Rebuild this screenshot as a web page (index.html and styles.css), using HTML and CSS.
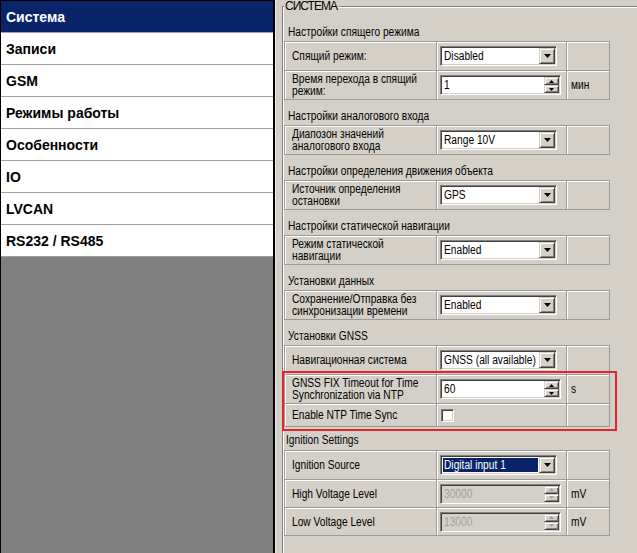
FILE: index.html
```html
<!DOCTYPE html>
<html>
<head>
<meta charset="utf-8">
<link rel="stylesheet" href="styles.css">
</head>
<body>
<div class="app">
  <nav class="nav">
    <ul class="nav-list">
      <li class="nav-item selected">Система</li>
      <li class="nav-item">Записи</li>
      <li class="nav-item">GSM</li>
      <li class="nav-item">Режимы работы</li>
      <li class="nav-item">Особенности</li>
      <li class="nav-item">IO</li>
      <li class="nav-item">LVCAN</li>
      <li class="nav-item">RS232 / RS485</li>
    </ul>
  </nav>
  <div class="splitter"></div>
  <main class="main">
    <fieldset class="group">
      <legend class="group-title">СИСТЕМА</legend>

      <section class="sect">
        <div class="sect-title"><span class="t">Настройки спящего режима</span></div>
        <div class="grid">
          <div class="cell label"><span class="t">Спящий режим:</span></div>
          <div class="cell ctl">
            <div class="combo"><span class="val"><span class="t">Disabled</span></span><span class="btn"><svg width="7" height="4" viewBox="0 0 7 4"><polygon points="0,0 7,0 3.5,4" fill="#000"/></svg></span></div>
          </div>
          <div class="cell unit"></div>
          <div class="cell label"><span class="t2">Время перехода в спящий режим:</span></div>
          <div class="cell ctl">
            <div class="spin"><span class="val"><span class="t">1</span></span><span class="spin-btns"><span class="sbtn"><svg width="5" height="3" viewBox="0 0 5 3"><polygon points="2.5,0 5,3 0,3" fill="#000"/></svg></span><span class="sbtn"><svg width="5" height="3" viewBox="0 0 5 3"><polygon points="0,0 5,0 2.5,3" fill="#000"/></svg></span></span></div>
          </div>
          <div class="cell unit"><span class="t">мин</span></div>
        </div>
      </section>

      <section class="sect">
        <div class="sect-title"><span class="t">Настройки аналогового входа</span></div>
        <div class="grid">
          <div class="cell label"><span class="t2">Диапозон значений аналогового входа</span></div>
          <div class="cell ctl">
            <div class="combo"><span class="val"><span class="t">Range 10V</span></span><span class="btn"><svg width="7" height="4" viewBox="0 0 7 4"><polygon points="0,0 7,0 3.5,4" fill="#000"/></svg></span></div>
          </div>
          <div class="cell unit"></div>
        </div>
      </section>

      <section class="sect">
        <div class="sect-title"><span class="t">Настройки определения движения объекта</span></div>
        <div class="grid">
          <div class="cell label"><span class="t2">Источник определения остановки</span></div>
          <div class="cell ctl">
            <div class="combo"><span class="val"><span class="t">GPS</span></span><span class="btn"><svg width="7" height="4" viewBox="0 0 7 4"><polygon points="0,0 7,0 3.5,4" fill="#000"/></svg></span></div>
          </div>
          <div class="cell unit"></div>
        </div>
      </section>

      <section class="sect">
        <div class="sect-title"><span class="t">Настройки статической навигации</span></div>
        <div class="grid">
          <div class="cell label"><span class="t2">Режим статической навигации</span></div>
          <div class="cell ctl">
            <div class="combo"><span class="val"><span class="t">Enabled</span></span><span class="btn"><svg width="7" height="4" viewBox="0 0 7 4"><polygon points="0,0 7,0 3.5,4" fill="#000"/></svg></span></div>
          </div>
          <div class="cell unit"></div>
        </div>
      </section>

      <section class="sect">
        <div class="sect-title"><span class="t">Установки данных</span></div>
        <div class="grid">
          <div class="cell label"><span class="t2">Сохранение/Отправка без синхронизации времени</span></div>
          <div class="cell ctl">
            <div class="combo"><span class="val"><span class="t">Enabled</span></span><span class="btn"><svg width="7" height="4" viewBox="0 0 7 4"><polygon points="0,0 7,0 3.5,4" fill="#000"/></svg></span></div>
          </div>
          <div class="cell unit"></div>
        </div>
      </section>

      <section class="sect sect-gnss">
        <div class="sect-title"><span class="t">Установки GNSS</span></div>
        <div class="grid grid-gnss">
          <div class="cell label"><span class="t">Навигационная система</span></div>
          <div class="cell ctl">
            <div class="combo"><span class="val"><span class="t">GNSS (all available)</span></span><span class="btn"><svg width="7" height="4" viewBox="0 0 7 4"><polygon points="0,0 7,0 3.5,4" fill="#000"/></svg></span></div>
          </div>
          <div class="cell unit"></div>
          <div class="cell label"><span class="t2">GNSS FIX Timeout for Time Synchronization via NTP</span></div>
          <div class="cell ctl">
            <div class="spin"><span class="val"><span class="t">60</span></span><span class="spin-btns"><span class="sbtn"><svg width="5" height="3" viewBox="0 0 5 3"><polygon points="2.5,0 5,3 0,3" fill="#000"/></svg></span><span class="sbtn"><svg width="5" height="3" viewBox="0 0 5 3"><polygon points="0,0 5,0 2.5,3" fill="#000"/></svg></span></span></div>
          </div>
          <div class="cell unit"><span class="t">s</span></div>
          <div class="cell label"><span class="t">Enable NTP Time Sync</span></div>
          <div class="cell ctl"><span class="check"></span></div>
          <div class="cell unit"></div>
        </div>
        <div class="highlight"></div>
      </section>

      <section class="sect sect-ign">
        <div class="sect-title"><span class="t">Ignition Settings</span></div>
        <div class="grid grid-ign">
          <div class="cell label"><span class="t">Ignition Source</span></div>
          <div class="cell ctl">
            <div class="combo"><span class="val sel"><span class="t">Digital input 1</span></span><span class="btn"><svg width="7" height="4" viewBox="0 0 7 4"><polygon points="0,0 7,0 3.5,4" fill="#000"/></svg></span></div>
          </div>
          <div class="cell unit"></div>
          <div class="cell label"><span class="t">High Voltage Level</span></div>
          <div class="cell ctl">
            <div class="spin disabled"><span class="val"><span class="t">30000</span></span><span class="spin-btns"><span class="sbtn"><svg width="5" height="3" viewBox="0 0 5 3"><polygon points="2.5,0 5,3 0,3" fill="#a0a0a0"/></svg></span><span class="sbtn"><svg width="5" height="3" viewBox="0 0 5 3"><polygon points="0,0 5,0 2.5,3" fill="#a0a0a0"/></svg></span></span></div>
          </div>
          <div class="cell unit"><span class="t">mV</span></div>
          <div class="cell label"><span class="t">Low Voltage Level</span></div>
          <div class="cell ctl">
            <div class="spin disabled"><span class="val"><span class="t">13000</span></span><span class="spin-btns"><span class="sbtn"><svg width="5" height="3" viewBox="0 0 5 3"><polygon points="2.5,0 5,3 0,3" fill="#a0a0a0"/></svg></span><span class="sbtn"><svg width="5" height="3" viewBox="0 0 5 3"><polygon points="0,0 5,0 2.5,3" fill="#a0a0a0"/></svg></span></span></div>
          </div>
          <div class="cell unit"><span class="t">mV</span></div>
        </div>
      </section>
    </fieldset>
  </main>
</div>
</body>
</html>
```

FILE: styles.css
```css
* { box-sizing: border-box; }
html, body { margin: 0; padding: 0; }
body {
  width: 637px;
  height: 553px;
  overflow: hidden;
  background: #d4d0c8;
  font-family: "Liberation Sans", Arial, sans-serif;
  font-size: 12px;
  color: #000;
}
.app { display: flex; height: 553px; }

.nav {
  width: 275px;
  flex: none;
  background: #808080;
  border-left: 1px solid #000;
  border-right: 2px solid #000;
  border-top: 1px solid #000;
}
.nav-list { list-style: none; margin: 0; padding: 0; }
.nav-item {
  height: 32px;
  line-height: 33px;
  border-bottom: 1px solid #a0a0a0;
  background: #fff;
  padding-left: 5px;
  font-weight: bold;
  font-size: 14px;
  white-space: nowrap;
}
.nav-item.selected { background: #0a246a; color: #fff; }

.splitter { width: 1px; flex: none; background: #eeece6; }

.main { flex: 1; overflow: hidden; padding-left: 6px; }

.group {
  margin: 0;
  width: 380px;
  height: 620px;
  border: 1px solid #808080;
  box-shadow: inset 1px 1px 0 #fff;
  padding: 3px 0 0 1px;
  min-width: 0;
}
.group-title {
  padding: 0 2px 0 1px;
  line-height: 13px;
  font-size: 12px;
  letter-spacing: -1px;
  background: #d4d0c8;
}

/* narrow rendering of the dialog font */
.t {
  display: inline-block;
  flex: none;
  white-space: nowrap;
  transform: scaleX(0.85);
  transform-origin: 0 50%;
}
.t2 {
  display: block;
  flex: none;
  width: 160px;
  transform: scaleX(0.85);
  transform-origin: 0 50%;
}

.sect { margin-top: 8px; position: relative; }
.sect-title { height: 17px; line-height: 17px; padding-left: 4px; white-space: nowrap; }

.grid {
  display: grid;
  grid-template-columns: 152px 130px 43px;
  grid-auto-rows: 29px;
  width: fit-content;
  border-top: 1px solid #9a9a9a;
  border-left: 1px solid #9a9a9a;
}
.grid-gnss { grid-template-rows: 29px 29px 23px; }
.grid-ign { grid-template-rows: 29px 28px 28px; }

.cell {
  border-right: 1px solid #9a9a9a;
  border-bottom: 1px solid #9a9a9a;
  box-shadow: inset 1px 1px 0 #fff;
  display: flex;
  align-items: center;
  overflow: hidden;
}
.label { padding-left: 7px; padding-right: 0; line-height: 12px; }
.ctl { padding-left: 3px; }
.unit { padding-left: 4px; }

.combo, .spin {
  height: 20px;
  display: flex;
  align-items: stretch;
  background: #fff;
  border: 1px solid;
  border-color: #808080 #fff #fff #808080;
  box-shadow: inset 1px 1px 0 #404040, inset -1px -1px 0 #d4d0c8;
  padding: 1px;
}
.combo { width: 117px; }
.spin { width: 121px; }
.val {
  flex: 1;
  min-width: 0;
  padding-left: 2px;
  line-height: 16px;
  white-space: nowrap;
  overflow: hidden;
}
.val.sel {
  background: #0a246a;
  color: #fff;
  margin: 1px;
  line-height: 14px;
  padding-left: 1px;
}
.btn, .sbtn {
  flex: none;
  display: flex;
  align-items: center;
  justify-content: center;
  background: #d4d0c8;
  border: 1px solid;
  border-color: #d4d0c8 #404040 #404040 #d4d0c8;
  box-shadow: inset 1px 1px 0 #fff, inset -1px -1px 0 #808080;
}
.btn { width: 16px; }
.btn svg, .sbtn svg { display: block; }
.spin-btns { flex: none; width: 15px; display: flex; flex-direction: column; }
.sbtn { height: 8px; }

.spin.disabled { background: #d4d0c8; }
.spin.disabled .val { color: #a0a0a0; }

.check {
  width: 13px;
  height: 13px;
  margin-left: 1px;
  background: #fff;
  border: 1px solid;
  border-color: #808080 #fff #fff #808080;
  box-shadow: inset 1px 1px 0 #404040, inset -1px -1px 0 #d4d0c8;
}

.highlight {
  position: absolute;
  left: -2px;
  top: 43px;
  width: 335px;
  height: 60px;
  border: 2px solid #e0262a;
  pointer-events: none;
}

.sect-ign { margin-top: 5px; }
.sect-ign .sect-title { height: 18px; line-height: 16px; padding-left: 2px; }
```
